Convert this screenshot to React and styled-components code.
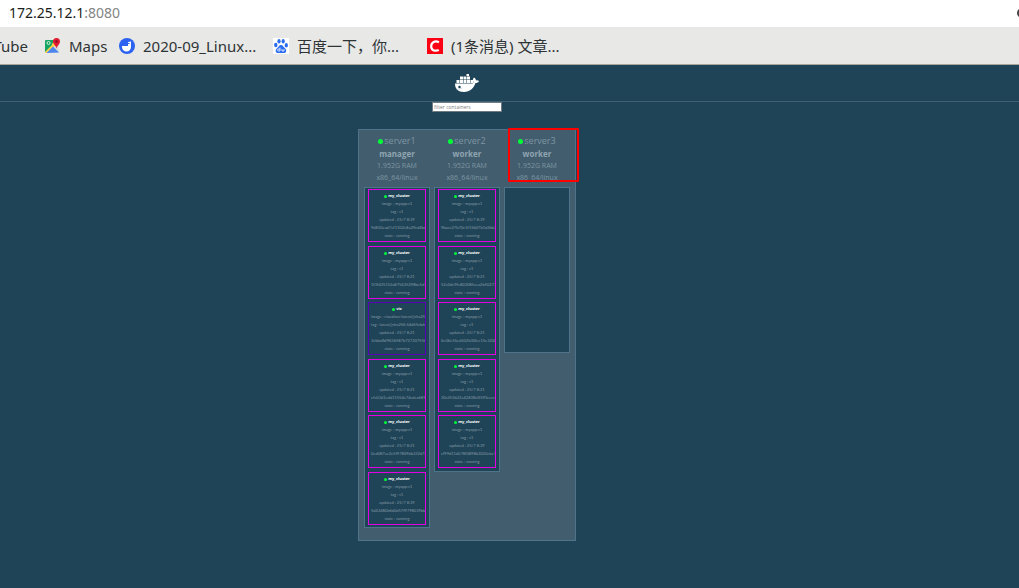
import React from 'react';
import styled, { createGlobalStyle } from 'styled-components';

const GlobalStyle = createGlobalStyle`
  * {
    box-sizing: border-box;
  }

  body {
    margin: 0;
    background: #1f4457;
    font-family: "Noto Sans", "Open Sans", "Noto Sans CJK SC", sans-serif;
    overflow-x: hidden;
  }
`;

const AddressBar = styled.div`
  display: flex;
  align-items: center;
  justify-content: space-between;
  height: 27px;
  padding: 0 0 2px 9px;
  background: #fff;
  overflow: hidden;
`;

const Url = styled.div`
  font-size: 14px;
  line-height: 18px;
  color: #1c1f20;
`;

const Port = styled.span`
  color: #858585;
`;

const SearchButton = styled.button`
  display: flex;
  width: 2px;
  height: 10px;
  padding: 0;
  border: 0;
  background: none;
  overflow: hidden;

  svg {
    flex: none;
  }
`;

const Bookmarks = styled.nav`
  display: flex;
  align-items: center;
  gap: 17px;
  height: 38px;
  background: #e8e8e6;
  border-bottom: 1px solid #a9a69f;
  overflow: hidden;
`;

const Bookmark = styled.a`
  display: flex;
  align-items: center;
  flex: none;
  gap: 8px;
  width: ${(props) => (props.$wide ? '137px' : '57px')};
  font-size: 15px;
  line-height: 20px;
  color: #2e3436;
  text-decoration: none;
  white-space: nowrap;

  svg {
    flex: none;
  }
`;

const CutBookmark = styled(Bookmark)`
  width: 28px;
  justify-content: flex-end;
`;

const Page = styled.div`
  color: #7d95a2;
`;

/* the page is centred left of the window's middle, hence the right padding */
const Header = styled.header`
  display: flex;
  justify-content: center;
  align-items: center;
  height: 37px;
  padding-right: 85px;
  border-bottom: 1px solid #40606f;
`;

const Main = styled.main`
  display: flex;
  flex-direction: column;
  align-items: center;
  padding-right: 85px;
`;

const Filter = styled.input`
  width: 70px;
  height: 10px;
  margin-bottom: 17px;
  padding: 0 1px;
  border: 1px solid #6f7b82;
  background: #fff;
  font-family: "Open Sans", sans-serif;
  font-size: 5px;
  line-height: 8px;
  color: #333;
  outline: none;

  &::placeholder {
    color: #808080;
  }
`;

const Cluster = styled.section`
  display: flex;
  align-items: flex-start;
  gap: 4px;
  padding: 0 5px 12px;
  background: #425d6e;
  border: 1px solid #4f7389;
`;

const Node = styled.div`
  width: 66px;
`;

const NodeInfo = styled.div`
  position: relative;
  padding: 5px 0 3px;
  text-align: center;
  font-family: "Open Sans", sans-serif;
  font-size: 7px;
  line-height: 12px;
  white-space: nowrap;
`;

const NodeName = styled.div`
  display: flex;
  align-items: center;
  justify-content: center;
  gap: 1px;
  font-size: 9px;
`;

const Role = styled.div`
  font-size: 8px;
  line-height: 13px;
  font-weight: bold;
  color: #8fa5b1;
`;

const Dot = styled.i`
  flex: none;
  width: ${(props) => props.$size}px;
  height: ${(props) => props.$size}px;
  border-radius: 50%;
  background: #00ff37;
`;

const Highlight = styled.div`
  position: absolute;
  top: -2px;
  left: 4px;
  width: 71px;
  height: 54px;
  border: 2px solid #f00;
  border-radius: 1px;
`;

const Tasks = styled.ul`
  display: flex;
  flex-direction: column;
  gap: 3px;
  min-height: 166px;
  margin: 0;
  padding: 1px 3px 2px;
  list-style: none;
  background: #1f4457;
  border: 1px solid #4f7389;
`;

const Task = styled.li`
  padding: 2px 2px 1px;
  border: 1px solid ${(props) => props.$color};
  font-family: Lato, "Open Sans", sans-serif;
  font-size: 4px;
  line-height: 8px;
  white-space: nowrap;
  text-align: center;
  color: #8399a5;
  overflow: hidden;

  &:nth-child(odd) {
    margin-bottom: 1px;
  }
`;

const TaskName = styled.div`
  display: flex;
  align-items: center;
  justify-content: center;
  gap: 1px;
  font-family: "Open Sans", sans-serif;
  font-weight: bold;
  color: #fff;
`;

const nodes = [
  {
    name: 'server1',
    role: 'manager',
    tasks: [
      { updated: '25/7 8:39', id: '9d820ead7ef1102e8a29cd4bda31c8' },
      { updated: '25/7 8:21', id: '1f3f425152a875425298be5d195a9c' },
      {
        name: 'viz',
        color: '#5c00b8',
        image: 'visualizer:latest@sha256:54',
        tag: 'latest@sha256:54d65cbde9f52e',
        updated: '25/7 8:21',
        id: '3cbbafbf9636587b72720755b17c',
      },
      { updated: '25/7 8:21', id: 'efc03d1edd11554e74cdca6896174' },
      { updated: '25/7 8:21', id: '0ed087ec2e5f97809bb332d7ce0285' },
      { updated: '25/7 8:39', id: '5d42480b6d0d57f9798039bbd2ec7a8' },
    ],
  },
  {
    name: 'server2',
    role: 'worker',
    tasks: [
      { updated: '25/7 8:39', id: '9bace27b70e5f15b07b1d2bb2b14074' },
      { updated: '25/7 8:21', id: '52e0dc9fe802085eea2b502770a0e02' },
      { updated: '25/7 8:21', id: '6e06e55ed502b30fec15e320070a084' },
      { updated: '25/7 8:21', id: '30c255b22e4283fb3f593ceeced2adb5' },
      { updated: '25/7 8:39', id: 'cf99d11d078f0898b3020ebc770a474' },
    ],
  },
  { name: 'server3', role: 'worker', highlight: true, tasks: [] },
];

const WhaleLogo = () => (
  <svg width="24" height="18" viewBox="0 0 48 36" fill="#fff" role="img" aria-label="Docker">
    <path d="M0 19h35c2-1 2-3 1-6-.6-2 .2-4 2-6 3 2 4 4 4 6 2-.6 4-.3 6 .8-1 3-4 4.200-7 4.200C37 29 30 36 18 36 6 36 0 30 0 19z" />
    <path d="M3 12h6v6H3zM10 12h6v6h-6zM17 12h6v6h-6zM24 12h6v6h-6zM10 5h6v6h-6zM17 5h6v6h-6zM24 5h6v6h-6zM23 0h5v4h-5z" />
    <path d="M31 12h5v6h-5z" />
    <circle cx="9" cy="26" r="2.500" fill="#1f4457" />
    <path d="M2 30c5 1 9 0 12-2" fill="none" stroke="#9fb2bc" />
  </svg>
);

const MapsIcon = () => (
  <svg width="16" height="16" viewBox="0 0 16 16" aria-hidden="true">
    <path d="M1 2h13v12a1 1 0 0 1-1 1H1a1 1 0 0 1-1-1V3a1 1 0 0 1 1-1z" fill="#dadde0" />
    <path d="M1 2h10L9 6 0 14V3a1 1 0 0 1 1-1z" fill="#18a561" />
    <path d="M0 12l9-8 2 3-9 8H1a1 1 0 0 1-1-1z" fill="#fbd34b" />
    <path d="M0 10l7-6v3l-7 7z" fill="#18a561" />
    <path d="M1.500 15L8 8.500l6 6z" fill="#4c87ee" />
    <circle cx="3.500" cy="5" r="1.500" fill="none" stroke="#d8f0e3" />
    <path d="M11.500 0A3.500 3.500 0 0 1 15 3.500c0 2.500-2.500 3.500-3.500 7-1-3.500-3.500-4.500-3.500-7A3.500 3.500 0 0 1 11.500 0z" fill="#e31b32" />
    <circle cx="11.500" cy="3.500" r="1.200" fill="#7b1322" />
  </svg>
);

const BlueIcon = () => (
  <svg width="16" height="16" viewBox="0 0 16 16" aria-hidden="true">
    <circle cx="8" cy="8" r="8" fill="#2b62f1" />
    <path d="M3 8h6V6h1.500V3.500H12V9a4.500 4.500 0 0 1-9 0z" fill="#fff" />
    <path d="M9 4.500h2" stroke="#fff" />
  </svg>
);

const PawIcon = () => (
  <svg width="16" height="16" viewBox="0 0 16 16" aria-hidden="true">
    <path d="M0 0h16v16H0z" fill="#fff" />
    <g fill="#2b6df0">
      <ellipse cx="2.800" cy="7" rx="1.700" ry="2.200" />
      <ellipse cx="6" cy="3.200" rx="1.600" ry="2.200" />
      <ellipse cx="10.200" cy="3.300" rx="1.600" ry="2.200" />
      <ellipse cx="13.300" cy="7.200" rx="1.600" ry="2.200" />
      <path d="M8 7c2 0 2.500 2 4 3.200 2 1.600 1.500 4.800-1 4.800H5c-2.500 0-3.200-3.200-1-4.800C5.500 9 6 7 8 7z" />
    </g>
    <path d="M7 9.500V13H5.500a1 1 0 0 1 0-2H7M9 11v2h2v-2" fill="none" stroke="#fff" strokeWidth=".8" />
  </svg>
);

const CsdnIcon = () => (
  <svg width="16" height="16" viewBox="0 0 16 16" aria-hidden="true">
    <path d="M0 0h16v16H0z" fill="#fc0013" />
    <path d="M12 4.200C8 2.300 4.300 4 4.200 8.200 4.100 12 7.500 13.700 11.800 12" fill="none" stroke="#fff" strokeWidth="2.200" />
  </svg>
);

function TaskCard({ name = 'my_cluster', color = '#e400e4', image = 'myapp:v1', tag = 'v1', updated, id }) {
  return (
    <Task $color={color}>
      <TaskName><Dot $size={3} />{name}</TaskName>
      <div>image : {image}</div>
      <div>tag : {tag}</div>
      <div>updated : {updated}</div>
      <div>{id}</div>
      <div>state : running</div>
    </Task>
  );
}

function NodeColumn({ node }) {
  return (
    <Node>
      <NodeInfo>
        <NodeName><Dot $size={5} />{node.name}</NodeName>
        <Role>{node.role}</Role>
        <div>1.952G RAM</div>
        <div>x86_64/linux</div>
        {node.highlight && <Highlight />}
      </NodeInfo>
      <Tasks>
        {node.tasks.map((task) => <TaskCard key={task.id} {...task} />)}
      </Tasks>
    </Node>
  );
}

function App() {
  return (
    <>
      <GlobalStyle />
      <AddressBar>
        <Url>172.25.12.1<Port>:8080</Port></Url>
        <SearchButton aria-label="Search">
          <svg width="10" height="10" viewBox="0 0 10 10">
            <circle cx="5" cy="5" r="4" fill="none" stroke="#444" strokeWidth="2" />
          </svg>
        </SearchButton>
      </AddressBar>
      <Bookmarks>
        <CutBookmark href="#youtube">YouTube</CutBookmark>
        <Bookmark href="#maps"><MapsIcon />Maps</Bookmark>
        <Bookmark href="#linux" $wide><BlueIcon />2020-09_Linux...</Bookmark>
        <Bookmark href="#baidu" $wide><PawIcon />百度一下，你...</Bookmark>
        <Bookmark href="#csdn" $wide><CsdnIcon />(1条消息) 文章...</Bookmark>
      </Bookmarks>
      <Page>
        <Header><WhaleLogo /></Header>
        <Main>
          <Filter type="text" placeholder="filter containers" aria-label="filter containers" />
          <Cluster>
            {nodes.map((node) => <NodeColumn key={node.name} node={node} />)}
          </Cluster>
        </Main>
      </Page>
    </>
  );
}

export default App;
